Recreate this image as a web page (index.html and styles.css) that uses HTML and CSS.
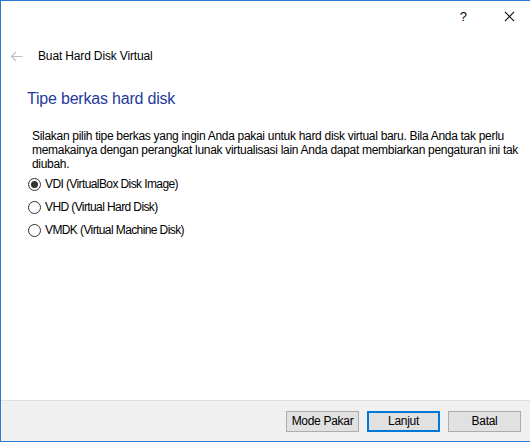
FILE: index.html
```html
<!DOCTYPE html>
<html>
<head>
<meta charset="utf-8">
<link rel="stylesheet" href="styles.css">
</head>
<body>
<div class="window">
  <div class="titlebar">
    <span class="help">?</span>
    <span class="close" aria-label="Tutup"></span>
  </div>
  <div class="header">
    <svg class="back" width="13" height="11" viewBox="0 0 13 11"><path d="M12.5 5.5 H1.5 M6 1 L1.5 5.5 L6 10" stroke="#bdbdbd" stroke-width="1.2" fill="none"/></svg>
    <span class="title">Buat Hard Disk Virtual</span>
  </div>
  <div class="content">
    <h1 class="heading">Tipe berkas hard disk</h1>
    <p class="desc">Silakan pilih tipe berkas yang ingin Anda pakai untuk hard disk virtual baru. Bila Anda tak perlu<br>memakainya dengan perangkat lunak virtualisasi lain Anda dapat membiarkan pengaturan ini tak<br>diubah.</p>
    <div class="options">
      <label class="option"><span class="radio checked"></span>VDI (VirtualBox Disk Image)</label>
      <label class="option"><span class="radio"></span>VHD (Virtual Hard Disk)</label>
      <label class="option"><span class="radio"></span>VMDK (Virtual Machine Disk)</label>
    </div>
  </div>
  <div class="footer">
    <button class="btn">Mode Pakar</button>
    <button class="btn default">Lanjut</button>
    <button class="btn">Batal</button>
  </div>
</div>
</body>
</html>
```
FILE: styles.css
```css
html, body {
  margin: 0;
  padding: 0;
  background: #ffffff;
}
body {
  width: 530px;
  height: 442px;
  overflow: hidden;
  font-family: "Liberation Sans", Arial, sans-serif;
  font-size: 12px;
  color: #000;
}
.window {
  box-sizing: border-box;
  width: 530px;
  height: 442px;
  border-top: 1px solid #2b7bd3;
  border-left: 1px solid #2b7bd3;
  border-bottom: 1px solid #2b7bd3;
  display: flex;
  flex-direction: column;
  background: #fff;
}
.titlebar {
  height: 30px;
  display: flex;
  align-items: center;
  justify-content: flex-end;
  padding-right: 15px;
}
.help {
  font-size: 13px;
  margin-right: 37px;
  margin-top: 1px;
}
.close {
  position: relative;
  display: block;
  flex: none;
  width: 11px;
  height: 11px;
}
.close::before,
.close::after {
  content: "";
  position: absolute;
  left: -1px;
  top: 5px;
  width: 13px;
  height: 1px;
  background: #000;
  transform: rotate(45deg);
}
.close::after {
  transform: rotate(-45deg);
}
.header {
  display: flex;
  align-items: center;
  height: 16px;
  margin-top: 17px;
  padding-left: 9px;
}
.back { display: block; margin-right: 15px; }
.title {
  font-size: 12px;
  line-height: 16px;
  letter-spacing: -0.15px;
}
.content {
  padding-left: 26px;
}
.heading {
  margin: 25px 0 0 0;
  font-weight: normal;
  font-size: 16px;
  line-height: 20px;
  letter-spacing: -0.2px;
  color: #1f3a9b;
}
.desc {
  margin: 20px 0 0 5px;
  font-size: 12px;
  line-height: 14px;
  letter-spacing: -0.3px;
}
.options {
  margin-top: 5px;
  display: flex;
  flex-direction: column;
  gap: 7px;
}
.option {
  display: flex;
  align-items: center;
  height: 16px;
  font-size: 12px;
  letter-spacing: -0.6px;
  padding-left: 1px;
}
.radio {
  box-sizing: border-box;
  width: 13px;
  height: 13px;
  border: 1px solid #333;
  border-radius: 50%;
  margin-right: 4px;
  display: flex;
  align-items: center;
  justify-content: center;
}
.radio.checked::after {
  content: "";
  width: 7px;
  height: 7px;
  border-radius: 50%;
  background: #333;
}
.footer {
  margin-top: auto;
  height: 40px;
  border-top: 1px solid #dfdfdf;
  background: #f0f0f0;
  display: flex;
  align-items: center;
  padding-left: 285px;
  gap: 8px;
}
.btn {
  box-sizing: border-box;
  width: 73px;
  height: 21px;
  background: #e1e1e1;
  border: 1px solid #adadad;
  font-family: "Liberation Sans", Arial, sans-serif;
  font-size: 12px;
  letter-spacing: -0.3px;
  color: #000;
  padding: 0;
}
.btn.default {
  border: 2px solid #0078d7;
}
```
